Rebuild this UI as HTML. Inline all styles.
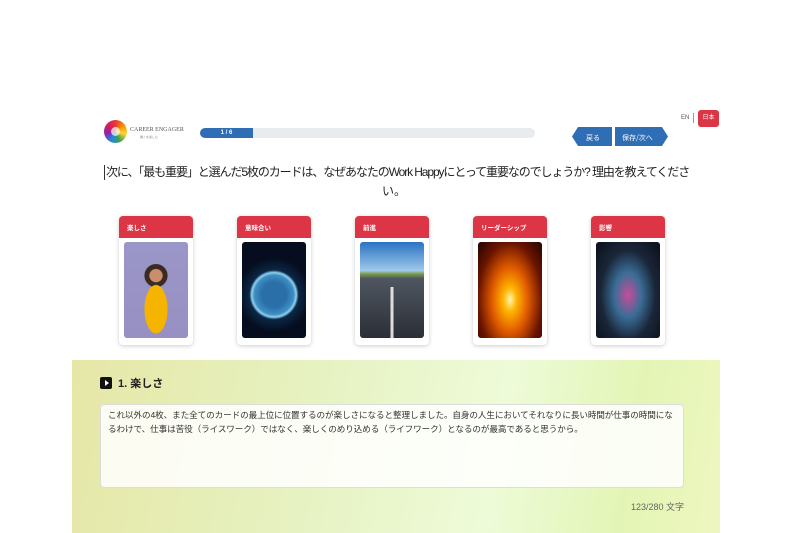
<!DOCTYPE html>
<html><head><meta charset="utf-8"><style>
*{margin:0;padding:0;box-sizing:border-box}
body{width:800px;height:533px;background:#fff;font-family:"Liberation Sans","Noto Sans CJK JP",sans-serif;position:relative;overflow:hidden;color:#222}
.a{position:absolute}
.card{position:absolute;top:216px;width:74px;height:129px;background:#fff;border-radius:4px;box-shadow:0 1px 4px rgba(0,0,0,.2)}
.card .h{height:22px;background:#dc3545;border-radius:4px 4px 0 0;color:#fff;font-size:6.5px;font-weight:bold;padding:6px 0 0 8px}
.card .im{position:absolute;left:5px;top:26px;width:64px;height:96px;border-radius:3px;overflow:hidden}
</style></head><body>
<div class="a" style="left:104px;top:120px;width:23px;height:23px;border-radius:50%;background:conic-gradient(#e53935,#fb8c00,#fdd835,#43a047,#1e88e5,#8e24aa,#d81b60,#e53935)"></div>
<div class="a" style="left:111px;top:127px;width:9px;height:9px;border-radius:50%;background:#fff;opacity:.7"></div>
<div class="a" style="left:130px;top:127px;font-family:'Liberation Serif',serif;font-size:6px;color:#555">CAREER ENGAGER</div>
<div class="a" style="left:140px;top:135px;font-size:3px;color:#888">働くを楽しむ</div>
<div class="a" style="left:200px;top:128px;width:335px;height:10px;border-radius:5px;background:#e9ecef"></div>
<div class="a" style="left:200px;top:128px;width:53px;height:10px;border-radius:5px 0 0 5px;background:#2f6db5;color:#fff;font-size:6px;text-align:center;line-height:10px;font-weight:bold">1 / 6</div>
<svg class="a" style="left:572px;top:127px" width="40" height="19"><polygon points="6,0 40,0 40,19 6,19 0,9.5" fill="#2f6db5"/><text x="14" y="13" font-size="7" fill="#fff" font-family="Noto Sans CJK JP">戻る</text></svg>
<svg class="a" style="left:615px;top:127px" width="53" height="19"><polygon points="0,0 47,0 53,9.5 47,19 0,19" fill="#2f6db5"/><text x="7" y="13" font-size="7" fill="#fff" font-family="Noto Sans CJK JP">保存/次へ</text></svg>
<div class="a" style="left:681px;top:115px;font-size:6px;color:#555">EN</div>
<div class="a" style="left:693px;top:113px;width:1px;height:10px;background:#999"></div>
<div class="a" style="left:698px;top:110px;width:21px;height:17px;background:#dc3545;border-radius:3px;color:#fff;font-size:6px;text-align:center;line-height:17px">日本</div>
<div class="a" style="left:106px;top:163px;white-space:nowrap;font-size:12px;letter-spacing:-1.1px;line-height:18px;color:#222">次に、「最も重要」と選んだ5枚のカードは、なぜあなたのWork Happyにとって重要なのでしょうか? 理由を教えてくださ</div>
<div class="a" style="left:382px;top:182px;font-size:12px;line-height:18px;color:#222">い。</div>
<div class="a" style="left:104px;top:165px;width:1px;height:15px;background:#333"></div>

<div class="card" style="left:119px"><div class="h">楽しさ</div><div class="im" style="background:radial-gradient(ellipse at 50% 70%,#f5b400 0 25%,transparent 26%),radial-gradient(circle at 50% 35%,#c98e6c 0 9%,#3a2a22 10% 16%,transparent 17%),linear-gradient(#9b96c8,#9790c3)"></div></div>
<div class="card" style="left:237px"><div class="h">意味合い</div><div class="im" style="background:radial-gradient(circle at 50% 55%,#2a6fa8 0 20%,#3f8fc4 32%,#8fd2f0 36%,#0b2745 40%,#050d1e 60%)"></div></div>
<div class="card" style="left:355px"><div class="h">前進</div><div class="im" style="background:linear-gradient(90deg,transparent 48%,#ddd 48% 52%,transparent 52%) 0 45px/100% 51px no-repeat,linear-gradient(#2a73c2 0,#9fc9ea 30%,#7fa04a 33%,#4f5660 38%,#2b2f36 100%)"></div></div>
<div class="card" style="left:473px"><div class="h">リーダーシップ</div><div class="im" style="background:radial-gradient(ellipse at 50% 60%,#fff6b0 0,#ffb300 15%,#e05a00 40%,#6a1400 70%,#200500 100%)"></div></div>
<div class="card" style="left:591px"><div class="h">影響</div><div class="im" style="background:radial-gradient(ellipse at 50% 55%,#c84c9a 0,#3a6d96 30%,#1a2638 60%,#0a0f1a 100%)"></div></div>

<div class="a" style="left:72px;top:360px;width:648px;height:173px;background:linear-gradient(100deg,#e5e7a6 0%,#e7f3c4 40%,#eefbd8 65%,#e3f5b5 85%,#eef6c0 100%)"></div>
<div class="a" style="left:100px;top:377px;width:12px;height:12px;background:#111;border-radius:2px"></div>
<div class="a" style="left:105px;top:380px;width:0;height:0;border-left:4px solid #fff;border-top:3px solid transparent;border-bottom:3px solid transparent"></div>
<div class="a" style="left:118px;top:375px;font-size:11px;font-weight:bold;color:#222">1. 楽しさ</div>
<div class="a" style="left:100px;top:404px;width:584px;height:84px;background:rgba(255,255,255,.85);border:1px solid #ddd;border-radius:4px;padding:3px 7px;font-size:8.6px;letter-spacing:-0.1px;line-height:14px;color:#333">これ以外の4枚、また全てのカードの最上位に位置するのが楽しさになると整理しました。自身の人生においてそれなりに長い時間が仕事の時間になるわけで、仕事は苦役（ライスワーク）ではなく、楽しくのめり込める（ライフワーク）となるのが最高であると思うから。</div>
<div class="a" style="left:580px;top:500px;width:104px;text-align:right;font-size:9px;color:#666">123/280 文字</div>
</body></html>
